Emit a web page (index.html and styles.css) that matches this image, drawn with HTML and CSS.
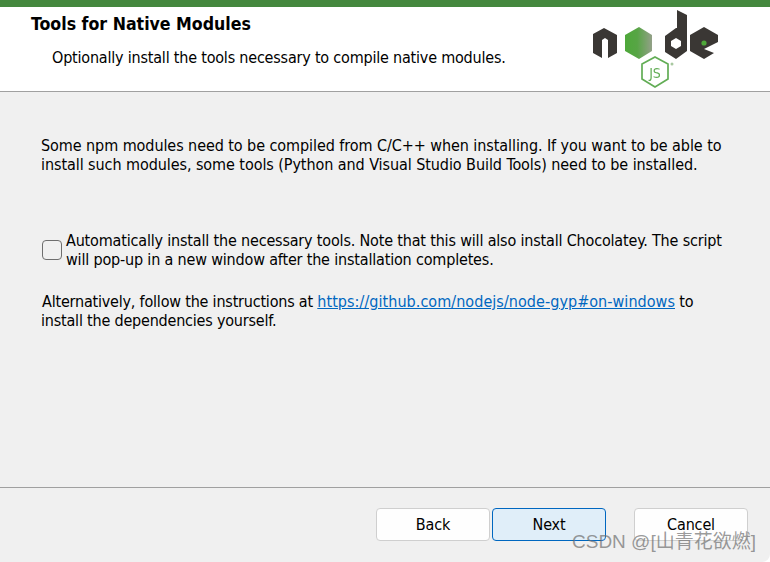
FILE: index.html
```html
<!DOCTYPE html>
<html lang="en">
<head>
<meta charset="utf-8">
<title>Tools for Native Modules</title>
<link rel="stylesheet" href="styles.css">
</head>
<body>
<div class="window">
  <div class="topbar"></div>
  <header class="header">
    <div class="header-text">
      <h1 class="title">Tools for Native Modules</h1>
      <p class="subtitle">Optionally install the tools necessary to compile native modules.</p>
    </div>
    <svg class="logo" width="130" height="84" viewBox="590 7 130 84">
      <defs>
        <linearGradient id="hex" x1="0" x2="1" y1="0" y2="0">
          <stop offset="0" stop-color="#4ea83a"/>
          <stop offset="0.45" stop-color="#57a545"/>
          <stop offset="1" stop-color="#93a088"/>
        </linearGradient>
      </defs>
      <path fill="#3a3734" d="M593 34 L604 28 L617 35 V53 L608 58 V40 L605 38 L602 40 V58 L593 53 Z"/>
      <path fill="url(#hex)" d="M639 27 L652 35 V51 L639 59 L625 51 V35 Z"/>
      <path fill="#3a3734" fill-rule="evenodd" d="M677 10 L687 15 V51 L676 59 L665 52 V36 L676 28 L677 28 Z M676 38 L671 41 V46 L676 49 L681 46 V41 Z"/>
      <path fill="#3a3734" d="M704 27 L718 35 V42 L704 49 L714 53 L704 59 L690 51 V35 Z"/>
      <circle cx="704" cy="43" r="2.6" fill="#4ea83a"/>
      <path fill="none" stroke="#62ad55" stroke-width="1.7" d="M655 57 L668 64 V79 L655 87 L642 79 V64 Z"/>
      <text class="logo-js" x="655" y="78" text-anchor="middle">JS</text>
      <circle cx="672" cy="64" r="1.5" fill="#a8c8a0"/>
    </svg>
  </header>
  <main class="content">
    <p class="intro">Some npm modules need to be compiled from C/C++ when installing. If you want to be able to install such modules, some tools (Python and Visual Studio Build Tools) need to be installed.</p>
    <label class="check-row">
      <span class="checkbox"></span>
      <span class="check-text">Automatically install the necessary tools. Note that this will also install Chocolatey. The script will pop-up in a new window after the installation completes.</span>
    </label>
    <p class="alt">Alternatively, follow the instructions at <a class="link" href="#">https://github.com/nodejs/node-gyp#on-windows</a> to install the dependencies yourself.</p>
  </main>
  <footer class="footer">
    <div class="btn-group">
      <button class="btn">Back</button>
      <button class="btn btn-primary">Next</button>
    </div>
    <button class="btn">Cancel</button>
  </footer>
</div>
<div class="watermark">CSDN @[山青花欲燃]</div>
</body>
</html>
```
FILE: styles.css
```css
* { box-sizing: border-box; }
html, body { margin: 0; padding: 0; width: 770px; height: 562px; overflow: hidden; background: #fff; }
body { position: relative; font-family: "DejaVu Sans", sans-serif; font-stretch: condensed; font-size: 16px; color: #000; }
.window { width: 770px; height: 562px; background: #f0f0f0; display: flex; flex-direction: column; border-bottom-right-radius: 8px; }
.topbar { height: 7px; background: #44883e; flex: none; }
.header { height: 85px; flex: none; background: #fff; border-bottom: 1px solid #a0a0a0; display: flex; justify-content: space-between; padding: 0 50px 0 31px; }
.title { margin: 7px 0 0; font-size: 17.6px; font-weight: bold; line-height: 20px; }
.subtitle { margin: 14px 0 0 21px; font-size: 16px; line-height: 20px; letter-spacing: -0.2px; }
.logo { flex: none; filter: blur(0.4px); }
.logo-js { font-family: "DejaVu Sans", sans-serif; font-size: 14px; fill: #62ad55; }
.content { flex: 1; padding: 0 41px; border-bottom: 1px solid #a0a0a0; }
.intro { margin: 44px 0 0; line-height: 19px; width: 690px; letter-spacing: -0.07px; }
.check-row { display: flex; align-items: center; margin-top: 57px; margin-left: 1px; gap: 4px; }
.checkbox { width: 20px; height: 20px; flex: none; background: #f0f0f0; border: 1px solid #6e6e6e; border-radius: 4px; }
.check-text { line-height: 19px; width: 665px; letter-spacing: -0.175px; }
.alt { margin: 23px 0 0; line-height: 19px; width: 690px; letter-spacing: -0.2px; text-indent: 1px; }
.link { color: #0067c0; letter-spacing: 0.05px; }
.footer { height: 74px; flex: none; display: flex; justify-content: space-between; padding: 20px 22px 0 376px; align-items: flex-start; }
.btn-group { display: flex; gap: 2px; }
.btn { width: 114px; height: 33px; padding: 0; background: #fefefe; border: 1px solid #cfcfcf; border-radius: 4px; font: inherit; font-stretch: condensed; letter-spacing: -0.15px; color: #000; }
.btn-primary { background: #e0eef9; border-color: #0067c0; }
.watermark { position: absolute; left: 572px; top: 531px; font-family: "Liberation Sans", "Noto Sans CJK SC", sans-serif; font-size: 19px; line-height: 22px; color: rgba(110,110,110,0.7); white-space: nowrap; }
```
